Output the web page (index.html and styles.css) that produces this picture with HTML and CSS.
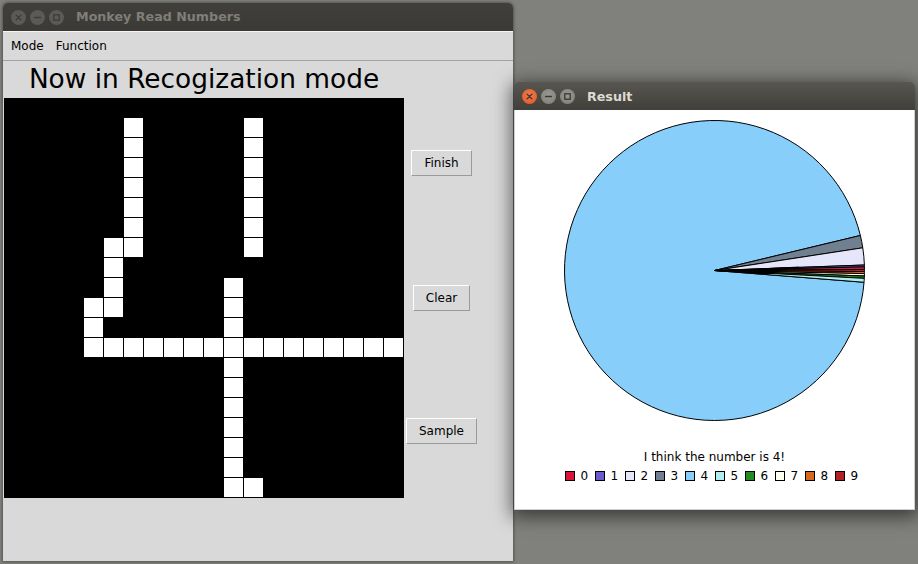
FILE: index.html
```html
<!DOCTYPE html>
<html>
<head>
<meta charset="utf-8">
<title>Monkey Read Numbers</title>
<link rel="stylesheet" href="styles.css">
</head>
<body>
<div class="desktop">
  <div class="win win-main">
    <div class="titlebar inactive">
      <div class="wbtns">
        <span class="wb wb-close"><svg width="15" height="15" viewBox="0 0 15 15"><path d="M5.2 5.2 L9.8 9.8 M9.8 5.2 L5.2 9.8" class="sym"/></svg></span>
        <span class="wb wb-min"><svg width="15" height="15" viewBox="0 0 15 15"><path d="M4.5 7.5 H10.5" class="sym"/></svg></span>
        <span class="wb wb-max"><svg width="15" height="15" viewBox="0 0 15 15"><rect x="4.8" y="4.8" width="5.4" height="5.4" class="sym" fill="none"/></svg></span>
      </div>
      <span class="wtitle">Monkey Read Numbers</span>
    </div>
    <div class="main-body">
      <div class="menubar"><span class="menu-item">Mode</span><span class="menu-item">Function</span></div>
      <div class="app">
        <div class="heading">Now in Recogization mode</div>
        <div class="board">
          <div class="on" style="grid-area:2/7"></div>
          <div class="on" style="grid-area:3/7"></div>
          <div class="on" style="grid-area:4/7"></div>
          <div class="on" style="grid-area:5/7"></div>
          <div class="on" style="grid-area:6/7"></div>
          <div class="on" style="grid-area:7/7"></div>
          <div class="on" style="grid-area:8/7"></div>
          <div class="on" style="grid-area:2/13"></div>
          <div class="on" style="grid-area:3/13"></div>
          <div class="on" style="grid-area:4/13"></div>
          <div class="on" style="grid-area:5/13"></div>
          <div class="on" style="grid-area:6/13"></div>
          <div class="on" style="grid-area:7/13"></div>
          <div class="on" style="grid-area:8/13"></div>
          <div class="on" style="grid-area:8/6"></div>
          <div class="on" style="grid-area:9/6"></div>
          <div class="on" style="grid-area:10/6"></div>
          <div class="on" style="grid-area:11/6"></div>
          <div class="on" style="grid-area:11/5"></div>
          <div class="on" style="grid-area:12/5"></div>
          <div class="on" style="grid-area:13/5"></div>
          <div class="on" style="grid-area:13/6"></div>
          <div class="on" style="grid-area:13/7"></div>
          <div class="on" style="grid-area:13/8"></div>
          <div class="on" style="grid-area:13/9"></div>
          <div class="on" style="grid-area:13/10"></div>
          <div class="on" style="grid-area:13/11"></div>
          <div class="on" style="grid-area:13/12"></div>
          <div class="on" style="grid-area:13/13"></div>
          <div class="on" style="grid-area:13/14"></div>
          <div class="on" style="grid-area:13/15"></div>
          <div class="on" style="grid-area:13/16"></div>
          <div class="on" style="grid-area:13/17"></div>
          <div class="on" style="grid-area:13/18"></div>
          <div class="on" style="grid-area:13/19"></div>
          <div class="on" style="grid-area:13/20"></div>
          <div class="on" style="grid-area:10/12"></div>
          <div class="on" style="grid-area:11/12"></div>
          <div class="on" style="grid-area:12/12"></div>
          <div class="on" style="grid-area:14/12"></div>
          <div class="on" style="grid-area:15/12"></div>
          <div class="on" style="grid-area:16/12"></div>
          <div class="on" style="grid-area:17/12"></div>
          <div class="on" style="grid-area:18/12"></div>
          <div class="on" style="grid-area:19/12"></div>
          <div class="on" style="grid-area:20/12"></div>
          <div class="on" style="grid-area:20/13"></div>
        </div>
        <div class="btncol">
          <div class="slot"><button class="tkbtn tkbtn-first">Finish</button></div>
          <div class="slot"><button class="tkbtn">Clear</button></div>
          <div class="slot"><button class="tkbtn">Sample</button></div>
        </div>
      </div>
    </div>
  </div>

  <div class="win win-result">
    <div class="titlebar active">
      <div class="wbtns">
        <span class="wb wb-close"><svg width="15" height="15" viewBox="0 0 15 15"><path d="M5.2 5.2 L9.8 9.8 M9.8 5.2 L5.2 9.8" class="sym"/></svg></span>
        <span class="wb wb-min"><svg width="15" height="15" viewBox="0 0 15 15"><path d="M4.5 7.5 H10.5" class="sym"/></svg></span>
        <span class="wb wb-max"><svg width="15" height="15" viewBox="0 0 15 15"><rect x="4.8" y="4.8" width="5.4" height="5.4" class="sym" fill="none"/></svg></span>
      </div>
      <span class="wtitle">Result</span>
    </div>
    <div class="result-body">
      <svg class="pie" width="400" height="340" viewBox="0 0 400 340">
        <g stroke="#000" stroke-width="1" stroke-linejoin="miter">
          <path fill="#87cefa" d="M199.5 160.5 L345.36 125.48 A150 150 0 1 0 349.04 172.27 Z"/>
          <path fill="#708090" d="M199.5 160.5 L347.77 137.81 A150 150 0 0 0 345.36 125.48 Z"/>
          <path fill="#e6e6fa" d="M199.5 160.5 L349.40 155.00 A150 150 0 0 0 347.77 137.81 Z"/>
          <path fill="#6a5acd" d="M199.5 160.5 L349.45 156.84 A150 150 0 0 0 349.40 155.00 Z"/>
          <path fill="#dc143c" d="M199.5 160.5 L349.50 159.45 A150 150 0 0 0 349.45 156.84 Z"/>
          <path fill="#b22222" d="M199.5 160.5 L349.50 161.55 A150 150 0 0 0 349.50 159.45 Z"/>
          <path fill="#d2691e" d="M199.5 160.5 L349.47 163.64 A150 150 0 0 0 349.50 161.55 Z"/>
          <path fill="#fffff0" d="M199.5 160.5 L349.40 166.00 A150 150 0 0 0 349.47 163.64 Z"/>
          <path fill="#228b22" d="M199.5 160.5 L349.29 168.35 A150 150 0 0 0 349.40 166.00 Z"/>
          <path fill="#afeeee" d="M199.5 160.5 L349.04 172.27 A150 150 0 0 0 349.29 168.35 Z"/>
        </g>
        <path fill="#000" d="M199.5 160.5 L285 156.6 L272 159.6 L252 164.8 Z"/>
      </svg>
      <div class="caption">I think the number is 4!</div>
      <div class="legend">
        <span class="lg"><i class="sw sw0"></i>0</span>
        <span class="lg"><i class="sw sw1"></i>1</span>
        <span class="lg"><i class="sw sw2"></i>2</span>
        <span class="lg"><i class="sw sw3"></i>3</span>
        <span class="lg"><i class="sw sw4"></i>4</span>
        <span class="lg"><i class="sw sw5"></i>5</span>
        <span class="lg"><i class="sw sw6"></i>6</span>
        <span class="lg"><i class="sw sw7"></i>7</span>
        <span class="lg"><i class="sw sw8"></i>8</span>
        <span class="lg"><i class="sw sw9"></i>9</span>
      </div>
    </div>
  </div>
</div>
</body>
</html>
```

FILE: styles.css
```css
html, body {
  margin: 0;
  padding: 0;
}
body {
  width: 918px;
  height: 564px;
  overflow: hidden;
}
.desktop {
  position: relative;
  width: 918px;
  height: 564px;
  background: #80817c;
  overflow: hidden;
  font-family: "DejaVu Sans", "Liberation Sans", sans-serif;
  color: #000;
}

/* Windows */
.win {
  position: absolute;
  display: flex;
  flex-direction: column;
  border-radius: 5px 5px 0 0;
}
.win-main {
  left: 3px;
  top: 3px;
  width: 510px;
  height: 558px;
  box-shadow: 0 0 3px 1px rgba(0, 0, 0, 0.35);
}
.win-result {
  left: 514px;
  top: 82px;
  width: 401px;
  height: 428px;
  box-shadow: 0 4px 18px 3px rgba(0, 0, 0, 0.55);
}

.titlebar {
  height: 28px;
  flex: 0 0 28px;
  display: flex;
  align-items: center;
  padding: 0 8px;
  border-radius: 5px 5px 0 0;
  box-sizing: border-box;
}
.titlebar.inactive {
  background: linear-gradient(#403f3b, #3b3a36);
}
.titlebar.active {
  background: linear-gradient(#57564f, #403f3b);
}
.wbtns {
  display: flex;
  gap: 4px;
}
.wb {
  width: 15px;
  height: 15px;
  border-radius: 50%;
  display: block;
}
.wb svg {
  display: block;
}
.sym {
  stroke: #3c3b37;
  stroke-width: 1.3;
  stroke-linecap: round;
}
.inactive .wb {
  background: #5b5a56;
}
.inactive .sym {
  stroke: #3d3c38;
}
.active .wb-close {
  background: radial-gradient(circle at 50% 40%, #f37b4f, #e2541f);
}
.active .wb-min,
.active .wb-max {
  background: radial-gradient(circle at 50% 40%, #9a9893, #7f7d78);
}
.active .sym {
  stroke: #3a3935;
}
.wtitle {
  margin-left: 12px;
  font-family: "DejaVu Sans", sans-serif;
  font-weight: bold;
  font-size: 12.7px;
  line-height: 16px;
}
.inactive .wtitle {
  color: #807e79;
}
.active .wtitle {
  color: #dfdbd2;
  padding-top: 2px;
}

/* Main window body */
.main-body {
  flex: 1;
  background: #d9d9d9;
  border-top: 1px solid #f4f4f4;
  display: flex;
  flex-direction: column;
}
.menubar {
  height: 28px;
  border-bottom: 1px solid #a2a2a2;
  display: flex;
  padding-left: 8px;
  gap: 12px;
  font-size: 12px;
  line-height: 28px;
}
.app {
  display: grid;
  grid-template-columns: 400px 75px;
  grid-template-rows: 37px 400px;
  padding-left: 1px;
}
.heading {
  grid-column: 1;
  grid-row: 1;
  padding-top: 3px;
  text-align: center;
  font-size: 26.4px;
  line-height: 30px;
  color: #000;
}
.board {
  grid-column: 1;
  grid-row: 2;
  display: grid;
  grid-template-columns: repeat(20, 20px);
  grid-template-rows: repeat(20, 20px);
  background: #000;
}
.board .on {
  width: 19px;
  height: 19px;
  background: #fff;
}
.btncol {
  grid-column: 2;
  grid-row: 2;
  display: flex;
  flex-direction: column;
}
.slot {
  flex: 1;
  display: flex;
  align-items: center;
  justify-content: center;
}
.tkbtn {
  height: 26px;
  padding: 0 12px;
  margin: 0;
  font-family: "DejaVu Sans", sans-serif;
  font-size: 12px;
  line-height: 24px;
  color: #000;
  background: #d9d9d9;
  border: 1px solid;
  border-color: #ffffff #9a9a9a #9a9a9a #ffffff;
  border-radius: 0;
}
.tkbtn-first {
  margin-top: -3px;
}

/* Result window */
.result-body {
  flex: 1;
  background: #fff;
  border: 1px solid #cfcfcf;
  border-top: none;
  display: flex;
  flex-direction: column;
  align-items: center;
}
.pie {
  display: block;
  flex: 0 0 340px;
}
.caption {
  font-size: 12px;
  line-height: 15px;
  text-align: center;
  width: 100%;
  color: #000;
}
.legend {
  margin-top: 4px;
  display: flex;
  justify-content: center;
  width: 100%;
  height: 14px;
}
.lg {
  width: 30px;
  display: flex;
  align-items: center;
  font-size: 12px;
  line-height: 14px;
}
.sw {
  display: block;
  width: 8px;
  height: 8px;
  border: 1px solid #000;
  margin-right: 6px;
}
.sw0 { background: #dc143c; }
.sw1 { background: #6a5acd; }
.sw2 { background: #e6e6fa; }
.sw3 { background: #708090; }
.sw4 { background: #87cefa; }
.sw5 { background: #afeeee; }
.sw6 { background: #228b22; }
.sw7 { background: #fffff0; }
.sw8 { background: #d2691e; }
.sw9 { background: #b22222; }
```
